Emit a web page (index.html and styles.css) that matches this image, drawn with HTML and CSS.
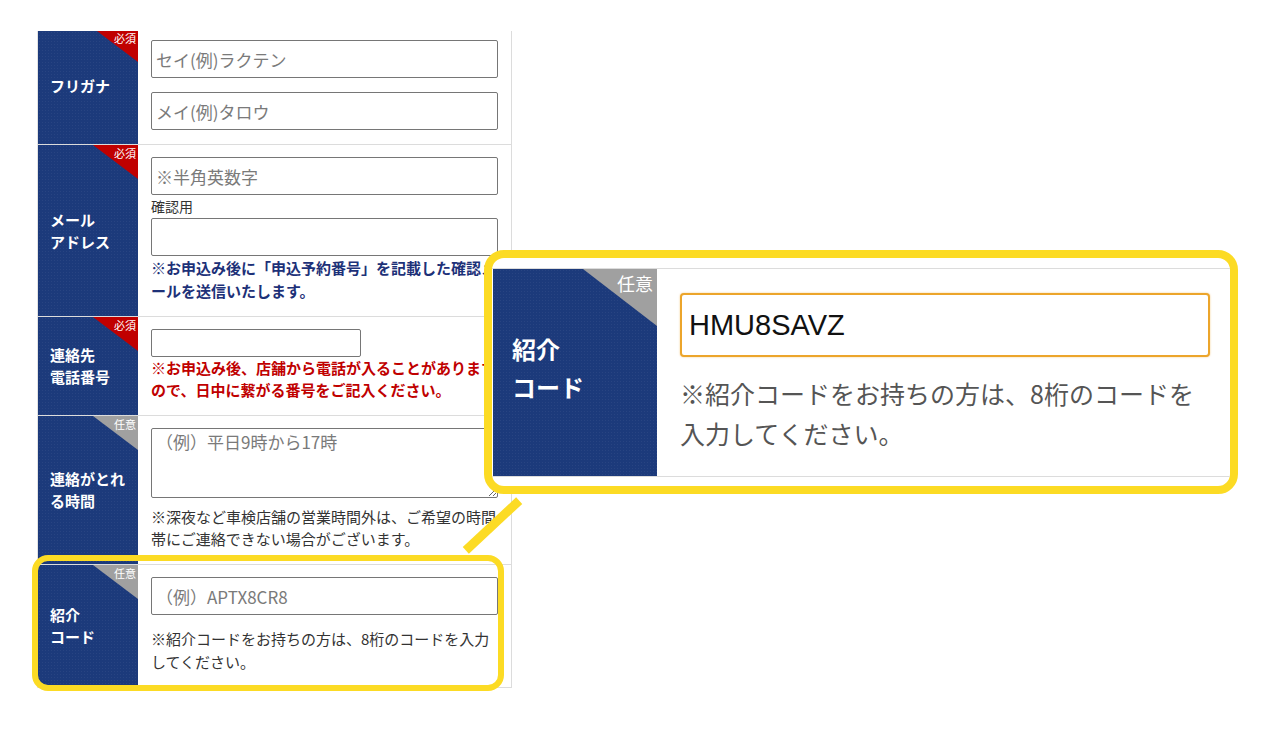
FILE: index.html
```html
<!DOCTYPE html>
<html lang="ja">
<head>
<meta charset="utf-8">
<title>フォーム</title>
<link rel="stylesheet" href="styles.css">
</head>
<body>
<div class="form-clip">
  <div class="form">
    <div class="row row-first">
      <div class="label"><span class="badge badge-req"><span class="badge-text">必須</span></span>フリガナ</div>
      <div class="field">
        <input class="text-input" type="text" placeholder="セイ(例)ラクテン">
        <input class="text-input gap-top" type="text" placeholder="メイ(例)タロウ">
      </div>
    </div>
    <div class="row">
      <div class="label"><span class="badge badge-req"><span class="badge-text">必須</span></span>メール<br>アドレス</div>
      <div class="field">
        <input class="text-input" type="text" placeholder="※半角英数字">
        <div class="sub-label">確認用</div>
        <input class="text-input" type="text">
        <p class="note note-blue">※お申込み後に「申込予約番号」を記載した確認メールを送信いたします。</p>
      </div>
    </div>
    <div class="row">
      <div class="label"><span class="badge badge-req"><span class="badge-text">必須</span></span>連絡先<br>電話番号</div>
      <div class="field">
        <input class="text-input tel-input" type="text">
        <p class="note note-red">※お申込み後、店舗から電話が入ることがありますので、日中に繋がる番号をご記入ください。</p>
      </div>
    </div>
    <div class="row">
      <div class="label"><span class="badge badge-opt"><span class="badge-text">任意</span></span>連絡がとれる時間</div>
      <div class="field">
        <textarea class="text-area" placeholder="（例）平日9時から17時"></textarea>
        <p class="note note-gray">※深夜など車検店舗の営業時間外は、ご希望の時間帯にご連絡できない場合がございます。</p>
      </div>
    </div>
    <div class="row">
      <div class="label"><span class="badge badge-opt"><span class="badge-text">任意</span></span>紹介<br>コード</div>
      <div class="field">
        <input class="text-input" type="text" placeholder="（例）APTX8CR8">
        <p class="note note-gray note-last">※紹介コードをお持ちの方は、8桁のコードを入力してください。</p>
      </div>
    </div>
  </div>
</div>

<div class="highlight"></div>
<div class="connector"></div>

<div class="zoom">
  <div class="zoom-row">
    <div class="zoom-label"><span class="zoom-badge"><span class="zoom-badge-text">任意</span></span>紹介<br>コード</div>
    <div class="zoom-field">
      <input class="zoom-input" type="text" value="HMU8SAVZ">
      <p class="zoom-note">※紹介コードをお持ちの方は、8桁のコードを入力してください。</p>
    </div>
  </div>
</div>
</body>
</html>
```
FILE: styles.css
```css
html, body {
  margin: 0;
  padding: 0;
  background: #ffffff;
}

body {
  font-family: "Noto Sans CJK JP", "Noto Sans", sans-serif;
  color: #333;
  position: relative;
  width: 1280px;
  height: 745px;
  overflow: hidden;
}

.form-clip {
  margin-left: 37px;
  margin-top: 31px;
  width: 475px;
  overflow: hidden;
}

.form {
  margin-top: -3px;
  border-left: 1px solid #e3e3e3;
}

.row {
  display: flex;
  border-bottom: 1px solid #dcdcdc;
}

.label {
  flex: none;
  width: 100px;
  box-sizing: border-box;
  padding: 0 12px;
  background-color: #1c3a7b;
  background-image: radial-gradient(rgba(255,255,255,0.05) 1px, transparent 1px);
  background-size: 3px 3px;
  color: #fff;
  font-weight: bold;
  font-size: 15px;
  line-height: 22px;
  display: flex;
  align-items: center;
  position: relative;
}

.badge {
  position: absolute;
  top: 0;
  right: 0;
  width: 45px;
  height: 34px;
  clip-path: polygon(0 0, 100% 0, 100% 100%);
}

.badge-req { background: #c00000; }
.badge-opt { background: #a0a0a0; }

.badge-text {
  position: absolute;
  top: 2px;
  right: 2px;
  font-size: 11px;
  line-height: 13px;
  font-weight: normal;
  color: #fff;
}

.row-first .badge-text {
  top: 4px;
}

.field {
  flex: 1;
  min-width: 0;
  padding: 12px 13px 14px;
  border-right: 1px solid #dcdcdc;
}

.text-input {
  display: block;
  width: 100%;
  height: 38px;
  box-sizing: border-box;
  margin: 0;
  padding: 0 4px;
  border: 1px solid #767676;
  border-radius: 2px;
  font-family: "Noto Sans CJK JP", "Noto Sans", sans-serif;
  font-size: 17px;
  color: #333;
  background: #fff;
}

.text-input::placeholder,
.text-area::placeholder {
  color: #7a7a7a;
}

.gap-top { margin-top: 14px; }

.tel-input {
  width: 210px;
  height: 28px;
}

.text-area {
  display: block;
  width: 100%;
  height: 70px;
  box-sizing: border-box;
  margin: 0;
  padding: 2px 4px;
  border: 1px solid #767676;
  border-radius: 2px;
  font-family: "Noto Sans CJK JP", "Noto Sans", sans-serif;
  font-size: 17px;
  line-height: 22px;
}

.sub-label {
  font-size: 14px;
  line-height: 23px;
  color: #333;
}

.note {
  margin: 0;
  font-size: 15px;
  line-break: anywhere;
}

.note-blue {
  color: #1d3178;
  font-weight: bold;
  line-height: 23px;
}

.note-red {
  color: #c00000;
  font-weight: bold;
  line-height: 22px;
}

.note-gray {
  color: #333;
  margin-top: 8px;
  line-height: 22px;
}

.note-last {
  margin-top: 12px;
  line-height: 23px;
}

/* overlays */
.highlight {
  position: absolute;
  left: 32px;
  top: 555px;
  width: 472px;
  height: 136px;
  box-sizing: border-box;
  border: 6px solid #fcdb24;
  border-radius: 16px;
  z-index: 2;
}

.connector {
  position: absolute;
  left: 456px;
  top: 521px;
  width: 73px;
  height: 9px;
  background: #fcdb24;
  transform: rotate(-43deg);
  z-index: 2;
}

.zoom {
  position: absolute;
  left: 484px;
  top: 250px;
  width: 754px;
  height: 244px;
  box-sizing: border-box;
  border: 8px solid #fcdb24;
  border-radius: 20px;
  background: #fff;
  overflow: hidden;
  z-index: 3;
}

.zoom-row {
  display: flex;
  margin-top: 10px;
  height: 209px;
  box-sizing: border-box;
  border-top: 1px solid #dcdcdc;
  border-bottom: 1px solid #dcdcdc;
}

.zoom-label {
  flex: none;
  width: 164px;
  margin-left: 1px;
  box-sizing: border-box;
  padding: 0 0 10px 19px;
  background-color: #1c3a7b;
  background-image: radial-gradient(rgba(255,255,255,0.05) 1px, transparent 1px);
  background-size: 3px 3px;
  color: #fff;
  font-weight: bold;
  font-size: 24px;
  line-height: 38px;
  display: flex;
  align-items: center;
  position: relative;
}

.zoom-badge {
  position: absolute;
  top: 0;
  right: 0;
  width: 74px;
  height: 57px;
  background: #a0a0a0;
  clip-path: polygon(0 0, 100% 0, 100% 100%);
}

.zoom-badge-text {
  position: absolute;
  top: 3px;
  right: 4px;
  font-size: 18px;
  line-height: 22px;
  font-weight: normal;
  color: #fff;
}

.zoom-field {
  flex: 1;
  min-width: 0;
  padding: 24px 20px 0 23px;
}

.zoom-input {
  display: block;
  width: 100%;
  height: 64px;
  box-sizing: border-box;
  margin: 0;
  padding: 0 7px;
  border: 2px solid #eca52b;
  border-radius: 4px;
  box-shadow: 0 0 2px rgba(236, 165, 43, 0.6);
  font-family: "Liberation Sans", Arial, sans-serif;
  font-size: 29px;
  color: #111;
  background: #fff;
}

.zoom-note {
  margin: 16px 0 0;
  font-size: 25px;
  line-height: 40px;
  color: #555;
  line-break: anywhere;
}
```
